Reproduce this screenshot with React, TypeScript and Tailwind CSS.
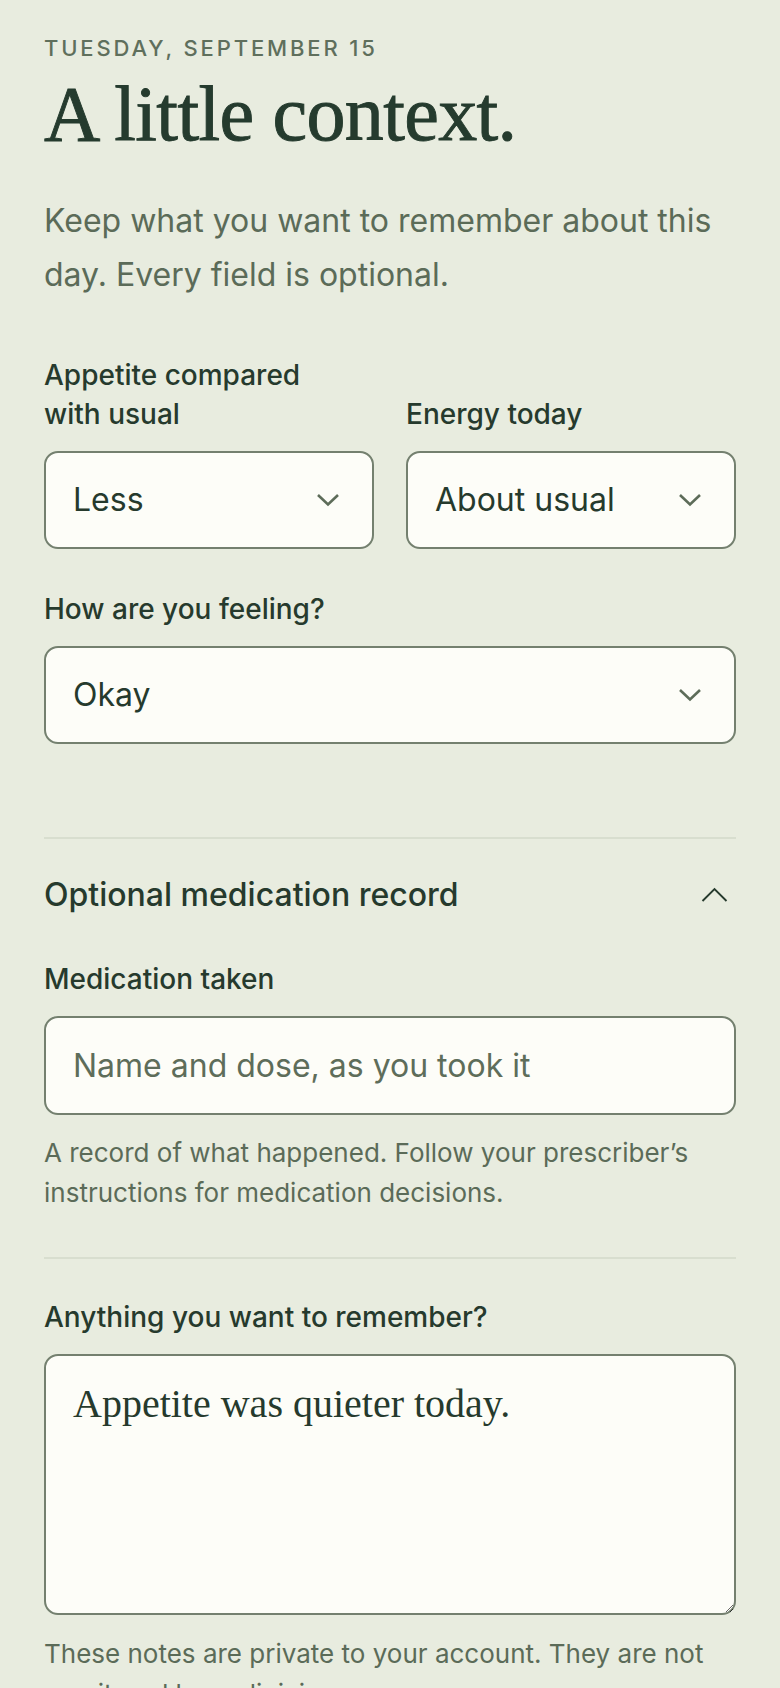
import React from "react";

function ChevronDown() {
  return (
    <svg width="24" height="14" viewBox="0 0 24 14" fill="none" aria-hidden="true">
      <path d="M2 2 L12 11.5 L22 2" stroke="#5d6c59" strokeWidth="2.6" strokeLinecap="butt" strokeLinejoin="miter" />
    </svg>
  );
}

function ChevronUp() {
  return (
    <svg width="27" height="15" viewBox="0 0 27 15" fill="none" aria-hidden="true">
      <path d="M1.5 14 L13.5 2 L25.5 14" stroke="#263a2d" strokeWidth="1.9" strokeLinecap="butt" strokeLinejoin="miter" />
    </svg>
  );
}

function SelectBox({ value, options }: { value: string; options: string[] }) {
  return (
    <div className="relative h-[98px] rounded-[14px] border-2 border-[#74806f] bg-[#fdfdf8]">
      <select
        defaultValue={value}
        className="h-full w-full appearance-none bg-transparent pl-[27px] pr-[64px] text-[32px] text-[#263a2d] outline-none font-['Inter',sans-serif]"
      >
        {options.map((o) => (
          <option key={o} value={o}>
            {o}
          </option>
        ))}
      </select>
      <div className="pointer-events-none absolute right-[32px] top-1/2 -translate-y-1/2 flex">
        <ChevronDown />
      </div>
    </div>
  );
}

export default function App() {
  return (
    <div className="min-h-screen bg-[#e8ecdf] px-[44px] pt-[34px] pb-[80px] font-['Inter',sans-serif]">
      <p className="text-[22px] leading-[28px] font-medium uppercase tracking-[0.13em] text-[#5f6f5c]">
        Tuesday, September 15
      </p>
      <h1 className="mt-[9px] font-['Liberation_Serif',serif] text-[78px] leading-[1.1] tracking-[-0.008em] text-[#253b2e] [-webkit-text-stroke:0.9px_#253b2e]">
        A little context.
      </h1>
      <p className="mt-[37px] text-[32px] leading-[54px] text-[#5b6b58]">
        Keep what you want to remember about this day. Every field is optional.
      </p>

      <div className="mt-[54px] grid grid-cols-2 gap-x-[32px]">
        <div className="flex flex-col justify-end">
          <label className="mb-[17px] max-w-[290px] text-[28px] leading-[39px] font-medium text-[#263a2d]">
            Appetite compared with usual
          </label>
          <SelectBox value="Less" options={["Less", "About usual", "More"]} />
        </div>
        <div className="flex flex-col justify-end">
          <label className="mb-[17px] text-[28px] leading-[39px] font-medium text-[#263a2d]">
            Energy today
          </label>
          <SelectBox value="About usual" options={["Lower", "About usual", "Higher"]} />
        </div>
      </div>

      <div className="mt-[41px] flex flex-col">
        <label className="mb-[17px] text-[28px] leading-[39px] font-medium text-[#263a2d]">
          How are you feeling?
        </label>
        <SelectBox value="Okay" options={["Not great", "Okay", "Good"]} />
      </div>

      <div className="mt-[93px] h-[2px] bg-[#d8decf]" />

      <button type="button" className="mt-[34px] flex w-full items-center justify-between text-left">
        <span className="text-[32px] leading-[44px] font-medium text-[#263a2d]">Optional medication record</span>
        <span className="mr-[8px] flex">
          <ChevronUp />
        </span>
      </button>

      <div className="mt-[43px] flex flex-col">
        <label className="mb-[17px] text-[28px] leading-[39px] font-medium text-[#263a2d]">Medication taken</label>
        <input
          type="text"
          placeholder="Name and dose, as you took it"
          className="h-[99px] w-full rounded-[14px] border-2 border-[#74806f] bg-[#fdfdf8] px-[27px] text-[32px] text-[#263a2d] outline-none placeholder:text-[#5e6d5a]"
        />
        <p className="mt-[18px] text-[26px] leading-[40px] text-[#5b6b58]">
          A record of what happened. Follow your prescriber’s instructions for medication decisions.
        </p>
      </div>

      <div className="mt-[44px] h-[2px] bg-[#d8decf]" />

      <div className="mt-[39px] flex flex-col">
        <label className="mb-[17px] text-[28px] leading-[39px] font-medium text-[#263a2d]">
          Anything you want to remember?
        </label>
        <textarea
          defaultValue="Appetite was quieter today."
          className="block h-[261px] w-full rounded-[14px] border-2 border-[#74806f] bg-[#fdfdf8] px-[27px] pt-[18px] font-['Liberation_Serif',serif] text-[40px] leading-[1.5] text-[#263a2d] outline-none"
        />
        <p className="mt-[19px] text-[26px] leading-[40px] text-[#5b6b58]">
          These notes are private to your account. They are not monitored by a clinician.
        </p>
      </div>
    </div>
  );
}
